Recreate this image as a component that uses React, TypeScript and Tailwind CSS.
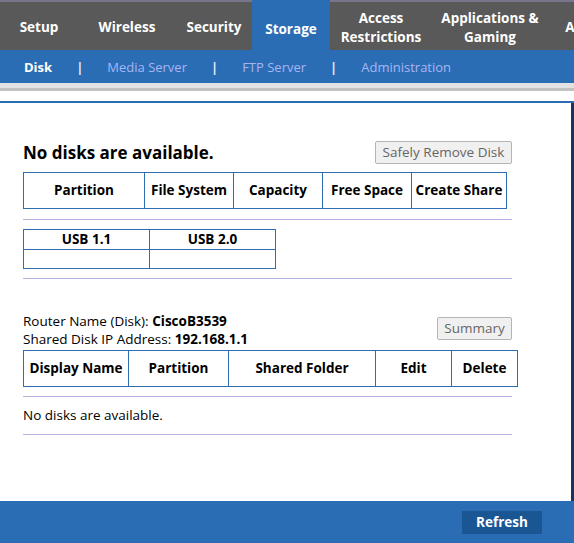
const tabs = [
  { label: "Setup", w: "w-[78px]" },
  { label: "Wireless", w: "w-[98px]" },
  { label: "Security", w: "w-[76px]" },
  { label: "Storage", w: "w-[78px]", active: true },
  { label: "Access Restrictions", w: "w-[102px]" },
  { label: "Applications & Gaming", w: "w-[116px]" },
  { label: "A", w: "w-[44px]" },
];

const subLinks = ["Media Server", "FTP Server", "Administration"];

const Cell = ({ children, className = "" }: { children?: React.ReactNode; className?: string }) => (
  <div
    className={`flex items-center justify-center border-r border-[#2f6db0] last:border-r-0 font-bold text-[13.5px] text-black ${className}`}
  >
    {children}
  </div>
);

const GrayButton = ({ label, className = "" }: { label: string; className?: string }) => (
  <button
    className={`h-[23px] rounded-[2px] border border-[#b4b4b4] bg-[#f0f0f0] text-[13.5px] text-[#666666] ${className}`}
  >
    {label}
  </button>
);

export default function App() {
  return (
    <div className="flex h-[543px] w-[574px] flex-col overflow-hidden bg-white font-['Open_Sans',sans-serif] text-[13.5px] text-black">
      {/* main tabs */}
      <div className="flex h-[50px] bg-[#595959] border-t-[2px] border-[#77748c]">
        {tabs.map((t) => (
          <div
            key={t.label}
            className={`${t.w} flex shrink-0 items-center justify-center text-center text-[13.5px] font-bold leading-[19px] text-white ${
              t.active ? "-mt-[2px] bg-[#2b6db4] pt-[9px]" : "pt-[3px]"
            }`}
          >
            <span className={t.label.includes(" ") ? "px-1" : ""}>{t.label}</span>
          </div>
        ))}
      </div>

      {/* sub nav */}
      <div className="flex h-[33px] items-center bg-[#2b6db4] pl-[24px] pt-[3px] text-[13px]">
        <span className="font-bold text-white">Disk</span>
        {subLinks.map((l) => (
          <div key={l} className="flex items-center">
            <span className="mx-[24px] font-bold text-[#e4eaf7]">|</span>
            <span className="text-[#a9b5f3]">{l}</span>
          </div>
        ))}
      </div>

      {/* gray band */}
      <div className="h-[5px] bg-[#e2e2e2]" />
      <div className="h-[3px] bg-[#c2c2c2]" />
      <div className="h-[10px] bg-white" />

      {/* content */}
      <div className="flex flex-1 border-t-[2px] border-[#2b6db4]">
        <div className="flex-1 pl-[23px]">
          <div className="mt-[38px] flex w-[489px] items-end justify-between">
            <h2 className="text-[17px] font-bold leading-[22px]">No disks are available.</h2>
            <GrayButton label="Safely Remove Disk" className="w-[137px]" />
          </div>

          <div className="mt-[8px] flex h-[37px] w-[484px] border border-[#2f6db0]">
            <Cell className="w-[121px]">Partition</Cell>
            <Cell className="w-[89px]">File System</Cell>
            <Cell className="w-[89px]">Capacity</Cell>
            <Cell className="w-[89px]">Free Space</Cell>
            <Cell className="flex-1">Create Share</Cell>
          </div>

          <div className="mt-[10px] h-px w-[489px] bg-[#b4b4e2]" />

          <div className="mt-[9px] w-[253px] border border-[#2f6db0]">
            <div className="flex h-[20px] border-b border-[#2f6db0]">
              <Cell className="w-[126px]">USB 1.1</Cell>
              <Cell className="flex-1">USB 2.0</Cell>
            </div>
            <div className="flex h-[18px]">
              <Cell className="w-[126px]" />
              <Cell className="flex-1" />
            </div>
          </div>

          <div className="mt-[9px] h-px w-[489px] bg-[#b4b4e2]" />

          <div className="mt-[33px] flex w-[489px] items-end justify-between">
            <div className="leading-[18px]">
              <div>
                Router Name (Disk): <b>CiscoB3539</b>
              </div>
              <div>
                Shared Disk IP Address: <b>192.168.1.1</b>
              </div>
            </div>
            <GrayButton label="Summary" className="mb-[8px] w-[75px]" />
          </div>

          <div className="mt-[2px] flex h-[37px] w-[495px] border border-[#2f6db0]">
            <Cell className="w-[105px]">Display Name</Cell>
            <Cell className="w-[100px]">Partition</Cell>
            <Cell className="w-[147px]">Shared Folder</Cell>
            <Cell className="w-[76px]">Edit</Cell>
            <Cell className="flex-1">Delete</Cell>
          </div>

          <div className="mt-[9px] h-px w-[489px] bg-[#b4b4e2]" />
          <div className="mt-[9px] leading-[18px]">No disks are available.</div>
          <div className="mt-[10px] h-px w-[489px] bg-[#b4b4e2]" />
        </div>
        <div className="w-[3px] bg-[#1d3159]" />
      </div>

      {/* footer */}
      <div className="flex h-[42px] shrink-0 items-start justify-end bg-[#2b6db4] pr-[32px] pt-[10px]">
        <button className="h-[23px] w-[80px] bg-[#1a5594] text-[13.5px] font-bold text-white">Refresh</button>
      </div>
    </div>
  );
}
